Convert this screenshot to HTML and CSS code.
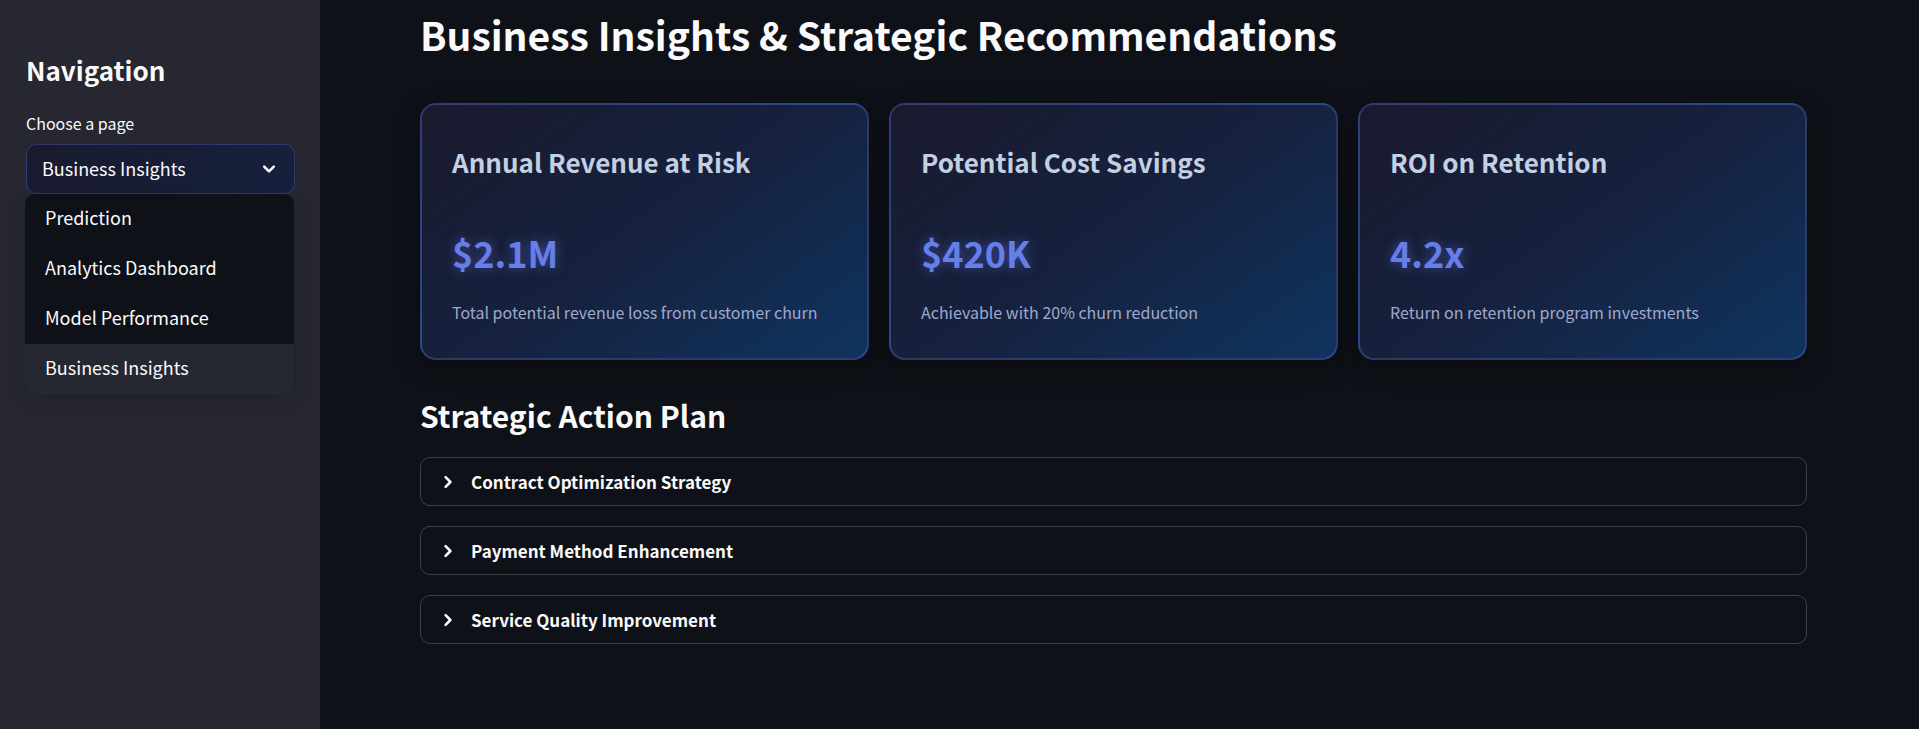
FILE: index.html
```
<!DOCTYPE html>
<html lang="en">
<head>
<meta charset="utf-8">
<title>Business Insights</title>
<link rel="stylesheet" href="styles.css">
</head>
<body>
<div class="app">
  <aside class="sidebar">
    <h2 class="sidebar-title">Navigation</h2>
    <label class="field-label" for="page">Choose a page</label>
    <div class="select-wrap">
      <select class="select" id="page">
        <option>Prediction</option>
        <option>Analytics Dashboard</option>
        <option>Model Performance</option>
        <option selected>Business Insights</option>
      </select>
      <svg class="chevron chevron-down" viewBox="0 0 14 14" aria-hidden="true"><path d="M2.2 4.6 7 9.4 11.8 4.6"/></svg>
      <ul class="menu" role="listbox" aria-label="Choose a page">
        <li class="menu-item" role="option">Prediction</li>
        <li class="menu-item" role="option">Analytics Dashboard</li>
        <li class="menu-item" role="option">Model Performance</li>
        <li class="menu-item menu-item-active" role="option" aria-selected="true">Business Insights</li>
      </ul>
    </div>
  </aside>
  <main class="main">
    <h1 class="page-title">Business Insights &amp; Strategic Recommendations</h1>
    <section class="cards">
      <article class="card">
        <h3 class="card-title">Annual Revenue at Risk</h3>
        <p class="card-value">$2.1M</p>
        <p class="card-text">Total potential revenue loss from customer churn</p>
      </article>
      <article class="card">
        <h3 class="card-title">Potential Cost Savings</h3>
        <p class="card-value">$420K</p>
        <p class="card-text">Achievable with 20% churn reduction</p>
      </article>
      <article class="card">
        <h3 class="card-title">ROI on Retention</h3>
        <p class="card-value">4.2x</p>
        <p class="card-text">Return on retention program investments</p>
      </article>
    </section>
    <h2 class="section-title">Strategic Action Plan</h2>
    <div class="plans">
      <details class="plan">
        <summary class="plan-head"><svg class="chevron" viewBox="0 0 14 14" aria-hidden="true"><path d="M4.6 2.2 9.4 7 4.6 11.8"/></svg>Contract Optimization Strategy</summary>
      </details>
      <details class="plan">
        <summary class="plan-head"><svg class="chevron" viewBox="0 0 14 14" aria-hidden="true"><path d="M4.6 2.2 9.4 7 4.6 11.8"/></svg>Payment Method Enhancement</summary>
      </details>
      <details class="plan">
        <summary class="plan-head"><svg class="chevron" viewBox="0 0 14 14" aria-hidden="true"><path d="M4.6 2.2 9.4 7 4.6 11.8"/></svg>Service Quality Improvement</summary>
      </details>
    </div>
  </main>
</div>
</body>
</html>
```
FILE: styles.css
```
* { box-sizing: border-box; }

body {
  margin: 0;
  background: #0e1117;
  color: #fafafa;
  font-family: "Noto Sans CJK SC", "Noto Sans", sans-serif;
  font-size: 18px;
}

h1, h2, h3, p, ul { margin: 0; padding: 0; }

.app { display: flex; min-height: 100vh; }

.sidebar {
  flex: 0 0 320px;
  padding: 52px 25px 24px 26px;
  background: #262730;
}

.sidebar-title {
  font-size: 26px;
  font-weight: 600;
  line-height: 36px;
  margin-bottom: 23px;
}

.field-label {
  display: block;
  font-size: 16px;
  line-height: 24px;
  margin-bottom: 9px;
}

.select-wrap { position: relative; }

.select {
  display: block;
  width: 100%;
  height: 50px;
  padding: 0 40px 3px 15px;
  appearance: none;
  border: 1px solid rgba(102, 126, 234, 0.3);
  border-radius: 10px;
  background: linear-gradient(145deg, #1a1a2e, #16213e);
  color: #fafafa;
  font: inherit;
}

.chevron {
  flex: none;
  width: 14px;
  height: 14px;
  fill: none;
  stroke: #fafafa;
  stroke-width: 2.6;
  stroke-linecap: round;
  stroke-linejoin: round;
}

.chevron-down {
  position: absolute;
  top: 18px;
  right: 19px;
  pointer-events: none;
}

.menu {
  position: absolute;
  top: 50px;
  left: -1px;
  width: 100%;
  overflow: hidden;
  list-style: none;
  border-radius: 10px;
  background: #0e1117;
  box-shadow: 0 5px 20px rgba(0, 0, 0, 0.16);
}

.menu-item { padding: 0 20px 3px; line-height: 47px; }
.menu-item-active { background: #252830; }

.main { flex: 1; min-width: 0; padding: 7px 112px 80px 100px; }

.page-title {
  font-size: 39px;
  font-weight: 600;
  line-height: 54px;
  margin-bottom: 42px;
}

.cards {
  display: grid;
  grid-template-columns: repeat(3, 1fr);
  gap: 20px;
  margin-bottom: 34px;
}

.card {
  padding: 39px 30px 32px;
  border: 2px solid rgba(102, 126, 234, 0.3);
  border-radius: 16px;
  background: linear-gradient(145deg, #1a1a2e 0%, #16213e 50%, #0f3460 100%);
  box-shadow: 0 8px 25px rgba(0, 0, 0, 0.3);
}

.card-title {
  color: #c3cfe2;
  font-size: 26px;
  font-weight: 600;
  line-height: 36px;
  margin-bottom: 48px;
}

.card-value {
  color: #667eea;
  font-size: 36px;
  font-weight: 700;
  line-height: 48px;
  margin-bottom: 22px;
  text-shadow: 0 0 12px rgba(102, 126, 234, 0.5);
}

.card-text { color: #a0a9cb; font-size: 16px; line-height: 28px; }

.section-title {
  font-size: 30px;
  font-weight: 600;
  line-height: 42px;
  margin-bottom: 21px;
}

.plans { display: grid; gap: 20px; }

.plan { border: 1px solid #3e4044; border-radius: 10px; }

.plan-head {
  display: flex;
  align-items: center;
  gap: 16px;
  padding: 0 20px;
  font-size: 17px;
  font-weight: 600;
  line-height: 47px;
  list-style: none;
  cursor: pointer;
}
```
